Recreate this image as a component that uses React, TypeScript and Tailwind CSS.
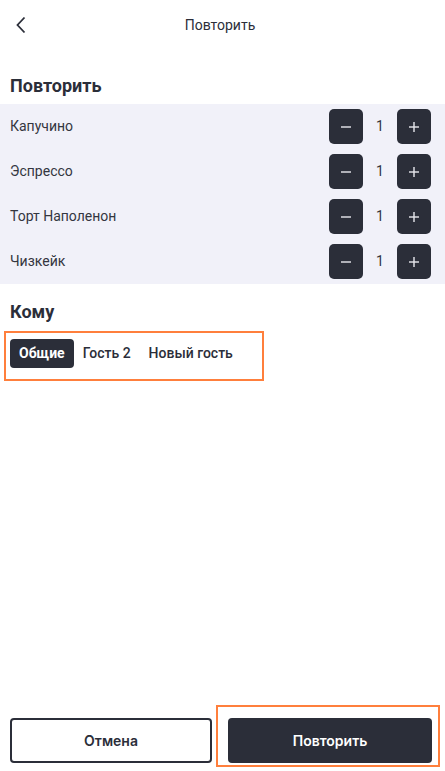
import { useState } from 'react';

type Item = { id: number; name: string; qty: number };

const initialItems: Item[] = [
  { id: 1, name: 'Капучино', qty: 1 },
  { id: 2, name: 'Эспрессо', qty: 1 },
  { id: 3, name: 'Торт Наполенон', qty: 1 },
  { id: 4, name: 'Чизкейк', qty: 1 }
];

const guests = ['Общие', 'Гость 2', 'Новый гость'];

function StepButton({ kind, onClick }: { kind: 'minus' | 'plus'; onClick: () => void }) {
  return (
    <button
      type="button"
      onClick={onClick}
      className="flex h-[35px] w-[34px] items-center justify-center rounded-[5px] bg-[#2b2e39] text-[#e8e8ee]"
    >
      <svg width="12" height="12" viewBox="0 0 12 12" fill="none" stroke="currentColor" strokeWidth="1.4">
        <path d="M1 6h10" />
        {kind === 'plus' && <path d="M6 1v10" />}
      </svg>
    </button>
  );
}

export default function App() {
  const [items, setItems] = useState(initialItems);
  const [guest, setGuest] = useState(0);

  const change = (id: number, delta: number) => {
    setItems((list) =>
      list.map((item) => (item.id === id ? { ...item, qty: Math.max(0, item.qty + delta) } : item))
    );
  };

  return (
    <div className="flex h-screen flex-col bg-white text-[#2b2e39]" style={{ fontFamily: 'Roboto, "Noto Sans", sans-serif' }}>
      {/* header */}
      <header className="flex h-[50px] shrink-0 items-center">
        <button type="button" className="flex w-[50px] items-center pl-[15px] text-[#2b2e39]">
          <svg width="12" height="18" viewBox="0 0 12 18" fill="none" stroke="currentColor" strokeWidth="1.8">
            <path d="M9.5 1.5 2.5 9l7 7.5" />
          </svg>
        </button>
        <h1 className="flex-1 text-center text-[14px] text-[#2b2e39]">Повторить</h1>
        <div className="w-[55px]" />
      </header>

      <h2 className="mt-[24px] mb-[6px] px-[10px] text-[18px] leading-[24px] font-bold">Повторить</h2>

      <section className="bg-[#f1f1f9]">
        {items.map((item) => (
          <div key={item.id} className="flex h-[45px] items-center pl-[10px] pr-[14px]">
            <span className="flex-1 text-[14px] text-[#34363f]">{item.name}</span>
            <StepButton kind="minus" onClick={() => change(item.id, -1)} />
            <span className="w-[34px] text-center text-[14px] text-[#34363f]">{item.qty}</span>
            <StepButton kind="plus" onClick={() => change(item.id, 1)} />
          </div>
        ))}
      </section>

      <h2 className="mt-[16px] px-[10px] text-[18px] leading-[24px] font-bold">Кому</h2>

      <div className="ml-[4px] mt-[7px] flex w-[260px] border-[2.5px] border-[#ff7f3c] pt-[6px] pb-[11px] pl-[4px]">
        {guests.map((g, i) => (
          <button
            key={g}
            type="button"
            onClick={() => setGuest(i)}
            className={
              i === guest
                ? 'h-[29px] rounded-[4px] bg-[#2b2e39] px-[9px] text-[14px] font-bold text-white'
                : 'h-[29px] rounded-[4px] px-[9px] text-[14px] font-medium text-[#2b2e39]'
            }
          >
            {g}
          </button>
        ))}
      </div>

      <div className="flex-1" />

      <footer className="flex gap-[16px] px-[10px] pb-[8px]" style={{ fontFamily: 'Inter, Roboto, sans-serif' }}>
        <button
          type="button"
          className="h-[45px] w-[202px] rounded-[4px] border-2 border-[#2b2e39] text-[14px] font-semibold text-[#2b2e39]"
        >
          Отмена
        </button>
        <div className="relative">
          <button
            type="button"
            className="h-[45px] w-[204px] rounded-[4px] bg-[#2b2e39] text-[14px] font-semibold text-white"
          >
            Повторить
          </button>
          <span className="pointer-events-none absolute -top-[13px] -right-[8px] -bottom-[4px] -left-[12px] border-[2.5px] border-[#ff7f3c]" />
        </div>
      </footer>
    </div>
  );
}
